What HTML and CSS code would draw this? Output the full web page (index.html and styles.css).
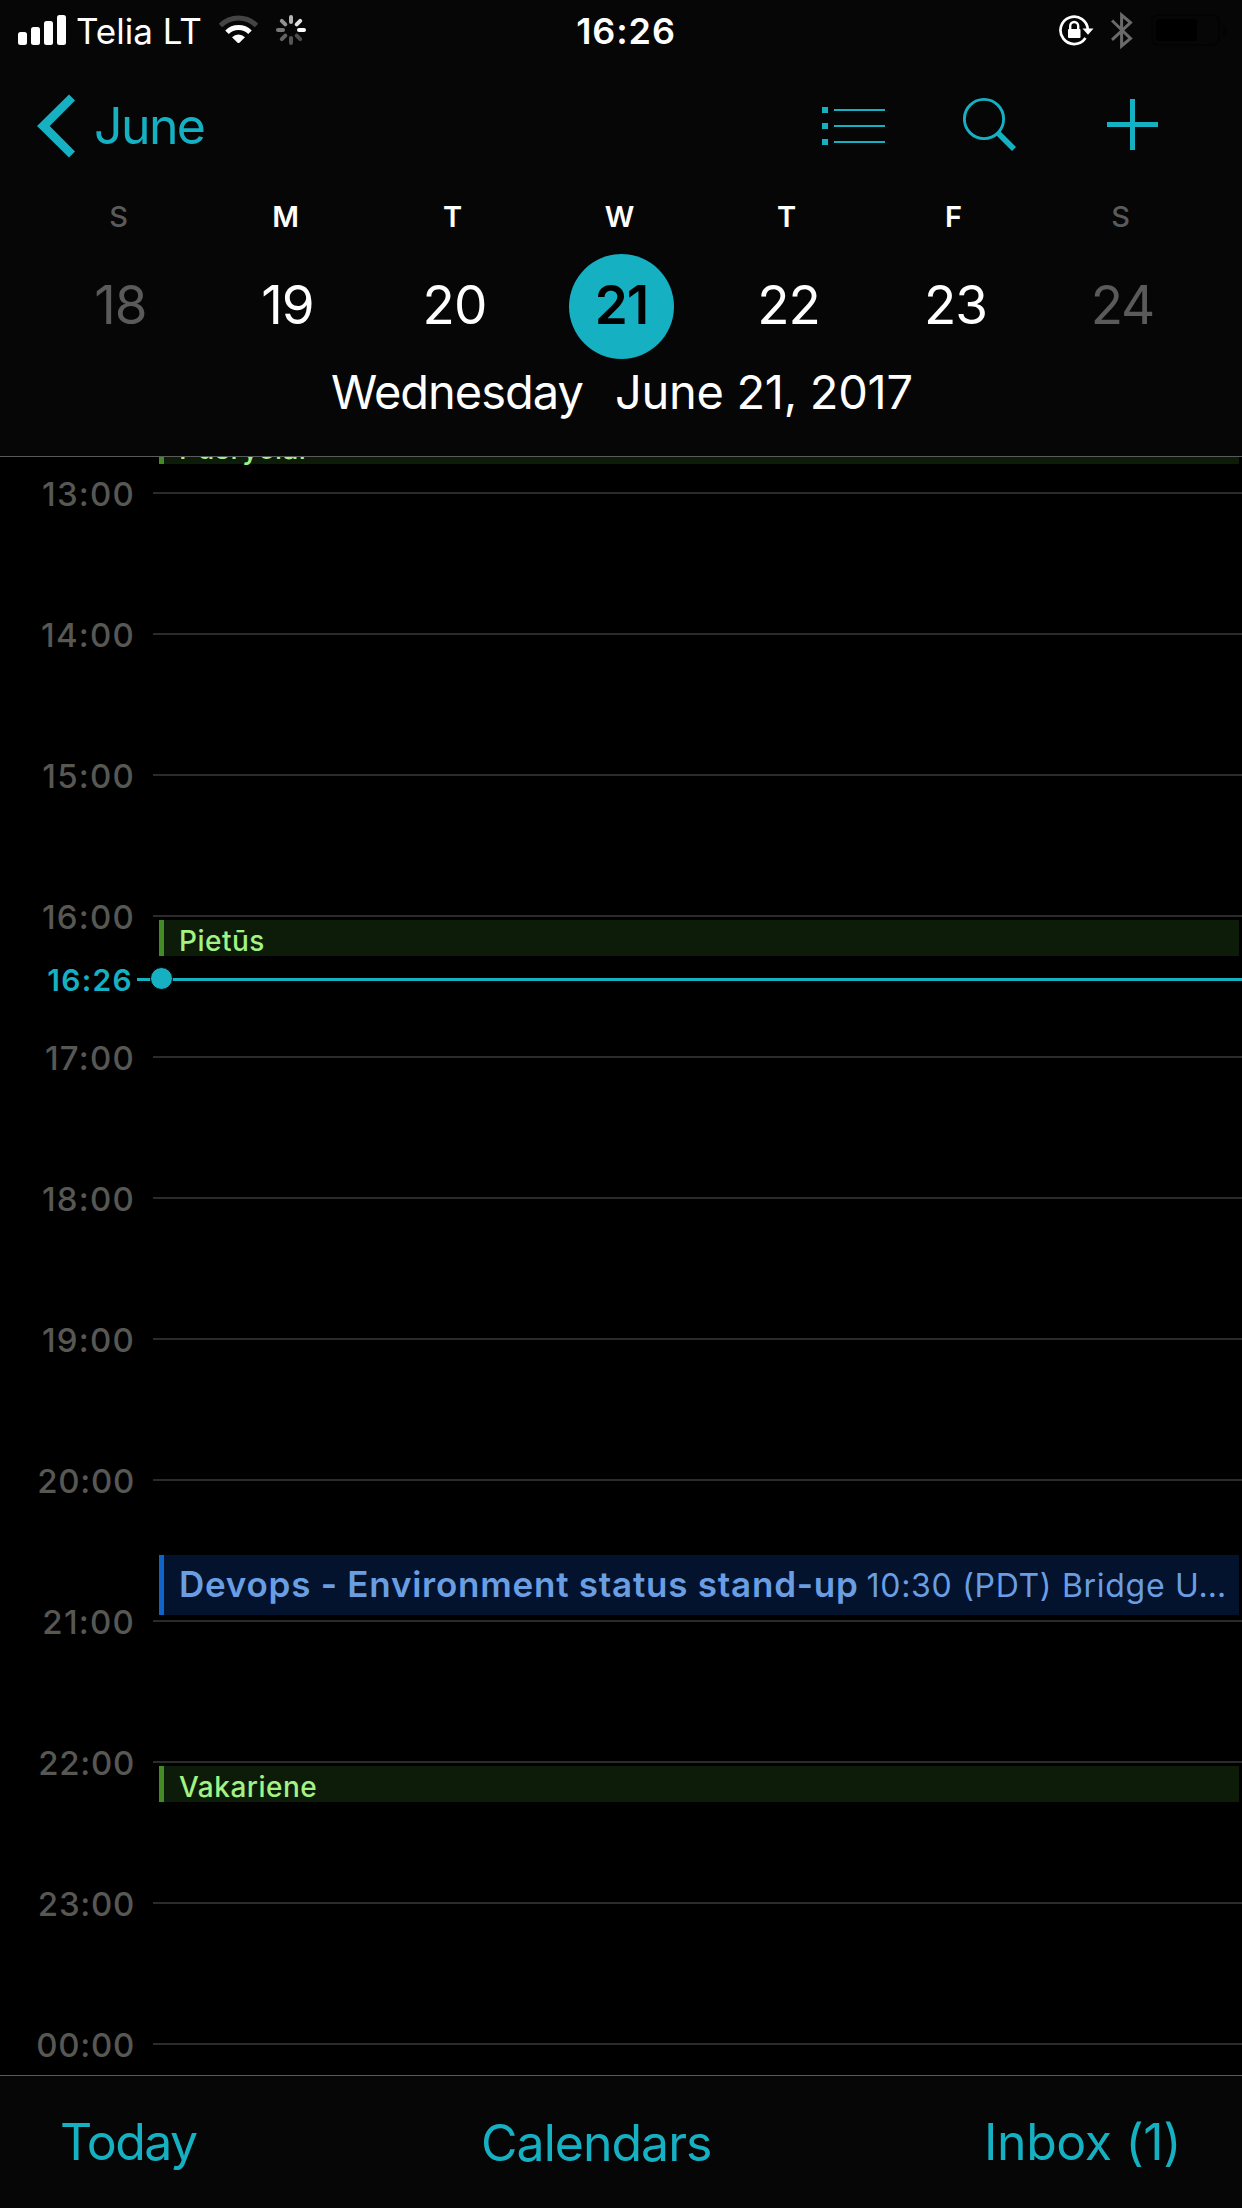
FILE: index.html
```html
<!DOCTYPE html>
<html lang="en">
<head>
	<meta charset="utf-8">
	<title>Calendar</title>
	<link rel="stylesheet" href="styles.css">
</head>
<body>
  <header class="header">
    <div class="status">
      <div class="status-left">
        <svg class="signal" width="48" height="60" viewBox="0 0 48 60" fill="#fff">
          <rect x="0" y="32" width="9" height="13" rx="2.5"/>
          <rect x="13" y="27" width="9" height="18" rx="2.5"/>
          <rect x="26" y="21" width="9" height="24" rx="2.5"/>
          <rect x="39" y="15" width="9" height="30" rx="2.5"/>
        </svg>
        <span class="carrier">Telia LT</span>
        <svg class="wifi" width="39" height="60" viewBox="0 0 39 60" fill="none">
          <path d="M1.5 25.5a25.5 25.5 0 0 1 36 0" stroke="#444" stroke-width="5"/>
          <path d="M8 32.3a16.3 16.3 0 0 1 23 0" stroke="#fff" stroke-width="5"/>
          <path d="M13 37.2a9.2 9.2 0 0 1 13 0L20.700 42.500a1.700 1.700 0 0 1-2.400 0z" fill="#fff"/>
        </svg>
        <svg class="spinner" width="30" height="60" viewBox="-15 -30 30 60" stroke-width="4" stroke-linecap="round">
          <path d="M0-13v5" stroke="#b4b4b4"/>
          <path d="M9.200-9.200L5.700-5.700" stroke="#e2e2e2"/>
          <path d="M13 0H8" stroke="#fff"/>
          <path d="M9.200 9.200L5.700 5.700" stroke="#4c4c4c"/>
          <path d="M0 13V8" stroke="#555"/>
          <path d="M-9.200 9.200L-5.700 5.700" stroke="#636363"/>
          <path d="M-13 0h5" stroke="#787878"/>
          <path d="M-9.200-9.200L-5.700-5.700" stroke="#929292"/>
        </svg>
      </div>
      <span class="clock">16:26</span>
      <div class="status-right">
        <svg width="35" height="60" viewBox="0 0 35 60" fill="none">
          <path d="M26.500 38.100A13.700 13.700 0 1 1 28.900 30" stroke="#fff" stroke-width="2.700"/>
          <path d="M23.500 28.500h11L29 34.800z" fill="#fff"/>
          <path d="M11.200 30v-4a4 4 0 0 1 8 0v4" stroke="#fff" stroke-width="2.400"/>
          <rect x="9" y="29" width="12.500" height="9" rx="1" fill="#fff"/>
        </svg>
        <svg class="bluetooth" width="22" height="60" viewBox="0 0 22 60" fill="none" stroke="#6a6a6a" stroke-width="3">
          <path d="M1 20.500L19.500 38.500 10.600 46V15L19.500 22.500 1 39.800"/>
        </svg>
        <svg class="battery" width="77" height="60" viewBox="0 0 77 60">
          <rect x="1" y="15" width="67" height="30" rx="6" fill="none" stroke="#030303" stroke-width="2"/>
          <rect x="5" y="19" width="41" height="22" rx="2.500" fill="#000"/>
          <path d="M72 24.500a6 6 0 0 1 0 11z" fill="#030303"/>
        </svg>
      </div>
    </div>

    <div class="nav">
      <a class="back">
        <svg width="38" height="64" viewBox="0 0 38 64" fill="#16b0c3"><path d="M32 .5l6 6L12.700 32 38 57.500l-6 6L0 32z"/></svg>
        <span>June</span>
      </a>
      <div class="tools">
        <svg width="63" height="60" viewBox="0 0 63 60" fill="#16b0c3">
          <path d="M0 11h6v6H0zM0 27h6v6H0zM0 43h6v6H0z"/>
          <path d="M12 13h51v2H12zM12 29h51v2H12zM12 45h51v2H12z"/>
        </svg>
        <svg class="search" width="54" height="60" viewBox="0 0 54 60" fill="none" stroke="#16b0c3">
          <circle cx="21" cy="23" r="19.600" stroke-width="2.900"/>
          <path d="M34.500 36.500L51 53" stroke-width="5.600"/>
        </svg>
        <svg class="plus" width="51" height="60" viewBox="0 0 51 60" fill="#16b0c3">
          <path d="M23 3h5v51h-5zM0 26h51v5H0z"/>
        </svg>
      </div>
    </div>

    <div class="week names">
      <span class="off">S</span><span>M</span><span>T</span><span>W</span><span>T</span><span>F</span><span class="off">S</span>
    </div>
    <div class="week dates">
      <span class="off">18</span><span>19</span><span>20</span><span class="today">21</span><span>22</span><span>23</span><span class="off">24</span>
    </div>
    <div class="full-date"><span class="weekday">Wednesday</span><span class="date">June 21, 2017</span></div>
  </header>

  <main class="timeline">
    <div class="slot first">
      <div class="event green early">Pusryčiai</div>
    </div>
    <div class="slot"><span class="hour">13:00</span><div class="line"></div></div>
    <div class="slot"><span class="hour">14:00</span><div class="line"></div></div>
    <div class="slot"><span class="hour">15:00</span><div class="line"></div></div>
    <div class="slot">
      <span class="hour">16:00</span><div class="line"></div>
      <div class="event green">Pietūs</div>
      <div class="now"><span class="now-time">16:26</span><div class="now-line"><i class="dot"></i></div></div>
    </div>
    <div class="slot"><span class="hour">17:00</span><div class="line"></div></div>
    <div class="slot"><span class="hour">18:00</span><div class="line"></div></div>
    <div class="slot"><span class="hour">19:00</span><div class="line"></div></div>
    <div class="slot">
      <span class="hour wide">20:00</span><div class="line"></div>
      <div class="event blue"><b class="name">Devops - Environment status stand-up</b><span class="place">10:30 (PDT) Bridge U…</span></div>
    </div>
    <div class="slot"><span class="hour">21:00</span><div class="line"></div></div>
    <div class="slot">
      <span class="hour wide">22:00</span><div class="line"></div>
      <div class="event green">Vakariene</div>
    </div>
    <div class="slot"><span class="hour wide">23:00</span><div class="line"></div></div>
    <div class="slot"><span class="hour wide">00:00</span><div class="line"></div></div>
  </main>

  <footer class="footer">
    <a class="f-today">Today</a>
    <a class="f-calendars">Calendars</a>
    <a class="f-inbox">Inbox (1)</a>
  </footer>
</body>
</html>
```
FILE: styles.css
```css
* {
  box-sizing: border-box;
}

body {
  margin: 0;
  width: 1242px;
  height: 2208px;
  overflow: hidden;
  display: flex;
  flex-direction: column;
  background: #000;
  color: #fff;
  font-family: Inter, "Liberation Sans", sans-serif;
}

svg {
  display: block;
  flex: none;
}

/* header */
.header {
  height: 457px;
  flex: none;
  background: #060606;
  border-bottom: 1px solid #5a5a5a;
}

.status {
  height: 60px;
  display: grid;
  grid-template-columns: 1fr auto 1fr;
  align-items: center;
}

.status-left {
  display: flex;
  align-items: center;
  padding-left: 18px;
}

.carrier {
  font-size: 35px;
  line-height: 57px;
  padding-top: 3px;
  margin-left: 10px;
  width: 126px;
  white-space: nowrap;
}

.wifi {
  margin-left: 17px;
}

.spinner {
  margin-left: 18px;
}

.clock {
  font-size: 36px;
  font-weight: 600;
  letter-spacing: 0.9px;
  line-height: 58px;
  padding: 2px 0 0 10px;
}

.status-right {
  display: flex;
  justify-content: flex-end;
  padding-right: 14px;
}

.bluetooth {
  margin-left: 17px;
}

.battery {
  margin-left: 18px;
}

.nav {
  height: 132px;
  display: flex;
  align-items: center;
  justify-content: space-between;
  padding: 0 84px 0 37px;
}

.back {
  display: flex;
  align-items: center;
  gap: 19px;
  color: #16b0c3;
  font-size: 50px;
  letter-spacing: -1.6px;
}

.tools {
  display: flex;
}

.search {
  margin-left: 78px;
}

.plus {
  margin-left: 90px;
}

.week {
  display: grid;
  grid-template-columns: repeat(7, 167px);
  text-align: center;
}

.names {
  padding-left: 35px;
  font-size: 29px;
  font-weight: 600;
  line-height: 49px;
}

.off {
  color: #5a5a5a;
}

.names .off {
  font-weight: 500;
}

.dates {
  margin-top: 13px;
  padding-left: 37px;
  height: 105px;
  justify-items: center;
  font-size: 53px;
  letter-spacing: -1px;
  line-height: 103px;
}

.today {
  width: 105px;
  height: 105px;
  border-radius: 50%;
  background: #16b0c3;
  color: #000;
  font-weight: 600;
}

.full-date {
  display: flex;
  font-size: 47px;
  line-height: 66px;
  white-space: nowrap;
  padding-left: 331px;
}

.weekday {
  width: 284px;
  letter-spacing: -1px;
}

.date {
  letter-spacing: -0.3px;
}

/* hours */
.timeline {
  height: 1618px;
  flex: none;
  overflow: hidden;
}

.slot {
  position: relative;
  height: 141px;
  display: flex;
}

.first {
  height: 35px;
}

.hour {
  width: 153px;
  height: 20px;
  margin-top: -8px;
  padding-right: 18px;
  text-align: right;
  font-size: 33px;
  font-weight: 500;
  letter-spacing: 1.2px;
  line-height: 20px;
  color: #575753;
}

.wide {
  letter-spacing: 0.7px;
}

.line {
  flex: 1;
  height: 2px;
  background: #2b2b2b;
}

.event {
  position: absolute;
  left: 159px;
  right: 3px;
  top: 5px;
  height: 36px;
  padding-left: 15px;
  border-left: 5px solid;
  font-size: 28px;
  font-weight: 500;
  letter-spacing: 0.5px;
  line-height: 43px;
  white-space: nowrap;
}

.early {
  top: -29px;
}

.green {
  background: #0d1b09;
  border-color: #438b24;
  color: #a3f284;
}

.blue {
  top: 76px;
  height: 60px;
  display: flex;
  align-items: baseline;
  background: #03122d;
  border-color: #1163c7;
  color: #6a9ee3;
  line-height: 59px;
}

.name {
  font-size: 35px;
  font-weight: 600;
  letter-spacing: 0.76px;
}

.place {
  margin-left: 8px;
  font-size: 32px;
  font-weight: 400;
  letter-spacing: 0.7px;
}

.now {
  position: absolute;
  left: 0;
  right: 0;
  top: 56px;
  height: 18px;
  display: flex;
}

.now-time {
  width: 137px;
  padding-right: 4px;
  text-align: right;
  font-size: 30px;
  font-weight: 600;
  letter-spacing: 1.3px;
  line-height: 18px;
  color: #16b0c3;
}

.now-line {
  flex: 1;
  height: 3px;
  margin-top: 7px;
  padding-left: 13px;
  display: flex;
  align-items: center;
  background: #16b0c3;
}

.dot {
  width: 23px;
  height: 23px;
  flex: none;
  margin-top: -2px;
  border: 1.500px solid #000;
  border-radius: 50%;
  background: #16b0c3;
}

/* bottom bar */
.footer {
  height: 133px;
  flex: none;
  display: flex;
  justify-content: space-between;
  padding: 0 61px 0 60px;
  border-top: 1px solid #5a5a5a;
  background: #060606;
  color: #16b0c3;
  font-size: 50px;
  line-height: 132px;
}

.f-today {
  letter-spacing: -1.6px;
}

.f-calendars {
  margin-left: 12px;
  padding-top: 1px;
  letter-spacing: -1px;
}

.f-inbox {
  letter-spacing: -0.4px;
}
```
